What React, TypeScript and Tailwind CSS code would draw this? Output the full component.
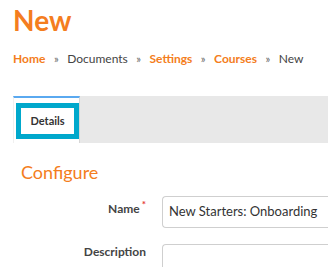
import React from 'react';

const App = () => {
  return (
    <div className="h-screen w-full overflow-hidden bg-white font-['Lato','Noto_Sans',sans-serif]">
      <div className="pl-[13px]">
        <h1 className="pt-[3px] text-[28px] font-bold leading-[34px] text-[#f47d20]">New</h1>

        <nav className="mt-[14px] flex items-center text-[12px] leading-[16px]">
          <span className="font-bold text-[#f47d20]">Home</span>
          <span className="px-[8.5px] text-[11px] text-[#666]">»</span>
          <span className="text-[#444]">Documents</span>
          <span className="px-[8.5px] text-[11px] text-[#666]">»</span>
          <span className="font-bold text-[#f47d20]">Settings</span>
          <span className="px-[8.5px] text-[11px] text-[#666]">»</span>
          <span className="font-bold text-[#f47d20]">Courses</span>
          <span className="px-[8.5px] text-[11px] text-[#666]">»</span>
          <span className="text-[#444]">New</span>
        </nav>

        <div className="mt-[29px] flex h-[47px] bg-[#e8e8e8]">
          <div className="flex w-[67px] flex-col border-t-2 border-t-[#5aa9f0] border-l border-l-[#f0f0f0] border-r border-r-[#d6d6d6] bg-white">
            <div className="ml-[2px] mt-[5px] flex h-[36px] w-[63px] items-center justify-center border-[5px] border-[#00a8cc]">
              <span className="text-[11px] font-bold text-[#333]">Details</span>
            </div>
          </div>
          <div className="flex-1" />
        </div>
      </div>

      <h2 className="ml-[21px] mt-[18px] text-[18px] leading-[22px] text-[#f47d20]">Configure</h2>

      <div className="mt-[13px] grid grid-cols-[146px_1fr] items-start gap-x-[16px] gap-y-[16px]">
        <label className="pt-[5px] text-right text-[12px] font-bold leading-[16px] text-[#444]">
          Name<sup className="ml-[2px] text-[10px] text-[#e53935]">*</sup>
        </label>
        <div className="flex h-[32px] items-center rounded-l-[4px] border border-r-0 border-[#cfcfcf] pl-[6px] text-[13px] text-[#333]">
          New Starters: Onboarding
        </div>
        <label className="text-right text-[12px] font-bold leading-[16px] text-[#444]">Description</label>
        <div className="h-[40px] rounded-l-[4px] border border-r-0 border-[#cfcfcf]" />
      </div>
    </div>
  );
};

export default App;
